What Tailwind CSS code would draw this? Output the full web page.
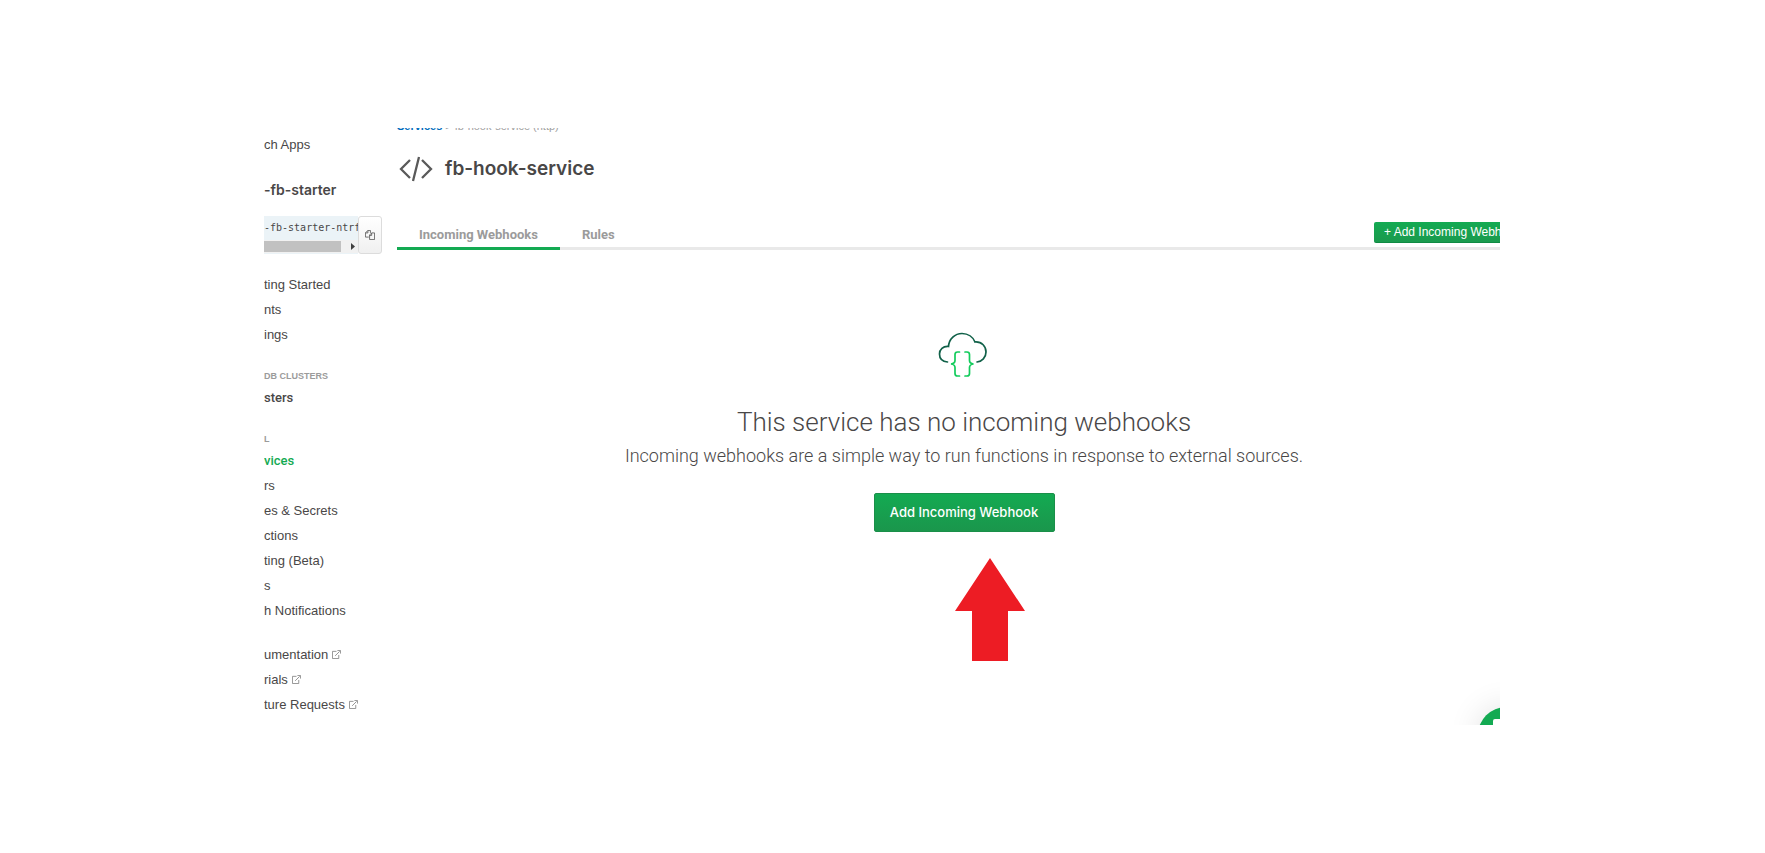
<!DOCTYPE html>
<html lang="en">
<head>
<meta charset="utf-8">
<title>fb-hook-service</title>
<script src="https://cdn.jsdelivr.net/npm/@tailwindcss/browser@4"></script>
</head>
<body class="bg-white py-32 pr-[265px] pl-[264px] font-['Liberation_Sans',sans-serif] text-[#494747]">
<div class="relative flex overflow-hidden">
  <aside class="w-[133px] shrink-0 pb-2 text-[13px] leading-[25px] whitespace-nowrap">
    <a href="#" class="mt-1 block">ch Apps</a>
    <h2 class="mt-5 font-['Inter',sans-serif] text-[14px] font-semibold">-fb-starter</h2>
    <div class="mt-[14px] flex h-[38px] w-[118px]">
      <div class="flex min-w-0 flex-1 flex-col overflow-hidden bg-[#ebf3f7]">
        <code class="h-6 font-['DejaVu_Sans_Mono',monospace] text-[10px] leading-6">-fb-starter-ntrfb</code>
        <div class="flex h-[13px] items-center bg-[#f1f1f1]">
          <div class="h-[11px] w-[77px] bg-[#c1c1c1]"></div>
          <svg class="ml-[10px] h-[7px] w-1" viewBox="0 0 4 7" fill="#404040"><path d="M0 0l4 3.500-4 3.500z"/></svg>
        </div>
      </div>
      <button aria-label="Copy app ID" class="flex w-6 items-center justify-center rounded-[3px] border border-[#dcdcdc] bg-linear-to-b from-white to-[#f0f0f0]">
        <svg class="size-[10px]" viewBox="0 0 12 12" fill="none" stroke="#555" stroke-width="1"><path d="M4.500 8.500h-4v-5l3-3h3v3M.5 3.500h3v-3M8 3.500h3.500v8h-6v-5.500zM5.500 6.500H8v-3"/></svg>
      </button>
    </div>
    <nav class="mt-[18px]">
      <a href="#" class="block">ting Started</a>
      <a href="#" class="block">nts</a>
      <a href="#" class="block">ings</a>
      <h3 class="mt-5 text-[9px] leading-[18px] font-bold text-[#9b9b9b]">DB CLUSTERS</h3>
      <a href="#" class="block font-['Roboto',sans-serif] font-medium">sters</a>
      <h3 class="mt-5 text-[9px] leading-[18px] font-bold text-[#9b9b9b]">L</h3>
      <a href="#" class="block font-['Roboto',sans-serif] font-medium text-[#13aa52]">vices</a>
      <a href="#" class="block">rs</a>
      <a href="#" class="block">es &amp; Secrets</a>
      <a href="#" class="block">ctions</a>
      <a href="#" class="block">ting (Beta)</a>
      <a href="#" class="block">s</a>
      <a href="#" class="block">h Notifications</a>
      <div class="mt-[19px]">
        <a href="#" class="flex items-center gap-1">umentation
          <svg class="size-[9px]" viewBox="0 0 10 10" fill="none" stroke="#8a8a8a"><path d="M5 1.500H.5v8h7V5.500M3.500 6.500l5-5M6 .5h3.500V4"/></svg></a>
        <a href="#" class="flex items-center gap-1">rials
          <svg class="size-[9px]" viewBox="0 0 10 10" fill="none" stroke="#8a8a8a"><path d="M5 1.500H.5v8h7V5.500M3.500 6.500l5-5M6 .5h3.500V4"/></svg></a>
        <a href="#" class="flex items-center gap-1">ture Requests
          <svg class="size-[9px]" viewBox="0 0 10 10" fill="none" stroke="#8a8a8a"><path d="M5 1.500H.5v8h7V5.500M3.500 6.500l5-5M6 .5h3.500V4"/></svg></a>
      </div>
    </nav>
  </aside>

  <main class="-mr-[31px] min-w-0 flex-1">
    <div class="-mt-[10px] text-[11px] leading-4 text-[#a0a0a0]"><a href="#" class="font-bold text-[#006cbc]">Services</a> &gt; fb-hook-service (http)</div>
    <div class="mt-[22px] flex items-center gap-3 pl-[2px]">
      <svg class="h-[26px] w-[34px]" viewBox="0 0 34 26" fill="none" stroke="#5a5a5a" stroke-width="2.300"><path d="M11 4L2 13l9 9M23 4l9 9-9 9M20 1l-6 24"/></svg>
      <h1 class="font-['Inter',sans-serif] text-[19px] leading-[26px] font-semibold">fb-hook-service</h1>
    </div>
    <div class="mt-8 flex items-start justify-between border-b-[3px] border-[#e9e9e9]">
      <div class="-mb-[3px] flex font-['Roboto',sans-serif] text-[13px] font-bold text-[#9b9b9b]">
        <button class="border-b-[3px] border-[#13aa52] px-[22px] pt-[11px] pb-[2px] leading-5">Incoming Webhooks</button>
        <button class="border-b-[3px] border-transparent px-[22px] pt-[11px] pb-[2px] leading-5">Rules</button>
      </div>
      <button class="mt-2 h-[21px] w-[157px] rounded-[2px] border-b border-[#0f8a43] bg-linear-to-b from-[#13aa52] to-[#1a9a4e] pl-[10px] text-left text-[12px] leading-5 whitespace-nowrap text-white">+ Add Incoming Webhook</button>
    </div>
    <section class="flex flex-col items-center pt-[82px] text-center">
      <svg class="h-[46px] w-[54px]" viewBox="0 0 54 46" fill="none" stroke-width="1.700" stroke-linecap="round">
        <path stroke="#116149" d="M10.500 30C5 29.500 2.500 26 2.500 22c0-4.500 3.500-8 9-7.500C12 7 18 1.500 25 1.500c6 0 11 3.500 13 8.500 7-.5 11 4.500 11 10 0 5.500-4 9.500-9 10"/>
        <path stroke="#13cc5c" d="M22.500 20h-2q-2.500 0-2.500 2.500v6q0 3-4 3.500q4 .5 4 3.500v6q0 2.500 2.500 2.500h2M28 20h2q2.500 0 2.500 2.500v6q0 3 4 3.500q-4 .5-4 3.500v6q0 2.500-2.500 2.500h-2"/>
      </svg>
      <h2 class="mt-[26px] font-['Roboto',sans-serif] text-[26px] leading-9 font-light whitespace-nowrap">This service has no incoming webhooks</h2>
      <p class="mt-1 font-['Roboto',sans-serif] text-[18px] leading-6 font-light whitespace-nowrap">Incoming webhooks are a simple way to run functions in response to external sources.</p>
      <div class="relative mt-[25px]">
        <button class="h-[39px] w-[181px] rounded-[2px] border border-[#1a8f49] bg-linear-to-b from-[#13aa52] to-[#1a964c] font-['Inter',sans-serif] text-[13px] font-medium text-white">Add Incoming Webhook</button>
        <svg class="absolute top-[65px] left-[81px] h-[104px] w-[70px]" viewBox="0 0 70 104" fill="#ed1c24"><path d="M35 0l35 53H53v50H17V53H0z"/></svg>
      </div>
    </section>
  </main>

  <button aria-label="Open chat" class="absolute -right-[34px] -bottom-[38px] size-14 rounded-full bg-[#13aa52] shadow-[0_0_32px_rgba(0,0,0,0.12)]">
    <span class="absolute top-3 left-[15px] size-7 rounded-xs bg-white"></span>
  </button>
</div>
</body>
</html>
